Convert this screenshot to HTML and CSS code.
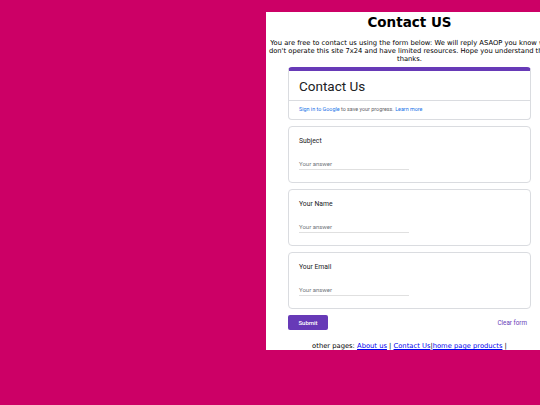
FILE: index.html
```html
<!DOCTYPE html>
<html lang="en">
<head>
<meta charset="utf-8">
<title>Contact US</title>
<link rel="stylesheet" href="styles.css">
</head>
<body>
<div class="page">
  <h1 class="title">Contact US</h1>
  <p class="intro">You are free to contact us using the form below: We will reply ASAOP you know we don't operate this site 7x24 and have limited resources. Hope you understand this, thanks.</p>
  <div class="form">
    <div class="card head-card">
      <div class="form-title">Contact Us</div>
      <div class="signin"><span class="blue">Sign in to Google</span> to save your progress. <span class="blue">Learn more</span></div>
    </div>
    <div class="card q-card">
      <div class="q-label">Subject</div>
      <div class="answer">Your answer</div>
    </div>
    <div class="card q-card">
      <div class="q-label">Your Name</div>
      <div class="answer">Your answer</div>
    </div>
    <div class="card q-card">
      <div class="q-label">Your Email</div>
      <div class="answer">Your answer</div>
    </div>
    <div class="actions">
      <div class="submit">Submit</div>
      <div class="clear">Clear form</div>
    </div>
  </div>
  <p class="other">other pages: <a href="#">About us</a> | <a href="#">Contact Us</a>|<a href="#">home page products</a> |</p>
</div>
</body>
</html>
```
FILE: styles.css
```css
html, body {
  margin: 0;
  height: 405px;
  overflow: hidden;
}
body {
  background: #cc0066;
  padding: 12px 0 0 266px;
  box-sizing: border-box;
}
.page {
  width: 287px;
  height: 338px;
  background: #ffffff;
  overflow: hidden;
  text-align: center;
  font-family: "DejaVu Sans", Verdana, sans-serif;
  color: #000;
}
.title {
  margin: 2px 0 0;
  font-size: 13.5px;
  line-height: 16px;
  font-weight: bold;
}
.intro {
  margin: 9px 0 0;
  font-size: 6.75px;
  line-height: 8px;
}
.form {
  width: 243px;
  margin: 4px auto 0;
  text-align: left;
  font-family: Roboto, Arial, sans-serif;
  display: flex;
  flex-direction: column;
  gap: 6px;
}
.card {
  background: #fff;
  border: 1px solid #dadce0;
  border-radius: 4px;
}
.head-card {
  border-top: 4px solid #673ab7;
}
.form-title {
  padding: 7px 10px 6px;
  font-size: 13.5px;
  line-height: 16px;
  color: #202124;
  border-bottom: 1px solid #dadce0;
}
.signin {
  padding: 4px 10px 6px;
  font-size: 5.4px;
  line-height: 8px;
  color: #5f6368;
}
.blue {
  color: #1a73e8;
}
.q-card {
  padding: 10px 10px 12px;
}
.q-label {
  font-size: 6.8px;
  line-height: 8px;
  color: #202124;
}
.answer {
  margin-top: 15px;
  width: 110px;
  height: 9px;
  font-size: 6px;
  line-height: 8px;
  color: #70757a;
  border-bottom: 1px solid #e0e0e0;
}
.actions {
  display: flex;
  justify-content: space-between;
  align-items: center;
}
.submit {
  width: 40px;
  height: 15px;
  background: #673ab7;
  color: #fff;
  border-radius: 2px;
  font-size: 6px;
  font-weight: 500;
  line-height: 15px;
  text-align: center;
}
.clear {
  margin-right: 4px;
  font-size: 6.3px;
  font-weight: 400;
  color: #673ab7;
}
.other {
  margin: 12px 0 0;
  font-size: 6.75px;
  line-height: 8px;
}
.other a {
  color: #0000ee;
}
```
